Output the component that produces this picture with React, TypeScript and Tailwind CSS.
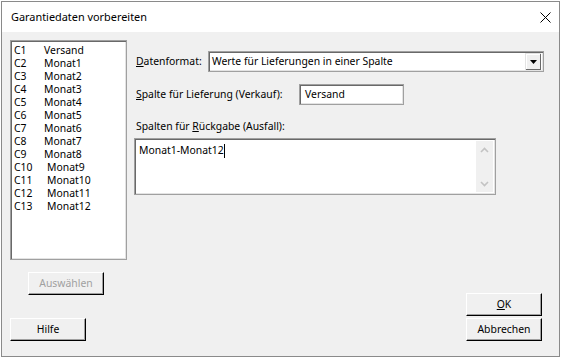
import type { ReactNode } from "react";

const columns: [string, string][] = [
  ["C1", "Versand"],
  ["C2", "Monat1"],
  ["C3", "Monat2"],
  ["C4", "Monat3"],
  ["C5", "Monat4"],
  ["C6", "Monat5"],
  ["C7", "Monat6"],
  ["C8", "Monat7"],
  ["C9", "Monat8"],
  ["C10", "Monat9"],
  ["C11", "Monat10"],
  ["C12", "Monat11"],
  ["C13", "Monat12"],
];

const sunken =
  "border border-[#a0a0a0] shadow-[inset_1px_1px_0_#696969,inset_-1px_-1px_0_#e3e3e3] bg-white";

const Button = ({
  children,
  disabled,
  className = "",
}: {
  children: ReactNode;
  disabled?: boolean;
  className?: string;
}) => (
  <button
    className={`w-[76px] h-[23px] bg-[#f0f0f0] border-t border-l border-b border-r border-t-white border-l-white border-b-black border-r-black shadow-[inset_-1px_-1px_0_#a0a0a0] flex items-center justify-center leading-none ${
      disabled ? "text-[#a0a0a0]" : "text-black"
    } ${className}`}
  >
    {children}
  </button>
);

const Chevron = ({ up }: { up?: boolean }) => (
  <svg width="9" height="6" viewBox="0 0 9 6">
    <path
      d={up ? "M1 5 L4.5 1.5 L8 5" : "M1 1 L4.5 4.5 L8 1"}
      fill="none"
      stroke="#c3c3c3"
      strokeWidth="1.6"
    />
  </svg>
);

export default function App() {
  return (
    <div className="w-[561px] h-[360px] bg-white pt-[1px] pl-[1px] font-['Noto_Sans','Open_Sans',sans-serif] text-[10.4px] text-black">
      <div className="w-[559px] h-[356px] border border-[#8a8a8a] flex flex-col">
        {/* title bar */}
        <div className="h-[30px] bg-white flex items-center justify-between pl-[9px] pr-[8px]">
          <span className="text-[10.9px]">Garantiedaten vorbereiten</span>
          <svg width="11" height="11" viewBox="0 0 11 11">
            <path d="M0.5 0.5 L10.5 10.5 M10.5 0.5 L0.5 10.5" stroke="#000" strokeWidth="1" />
          </svg>
        </div>

        {/* body */}
        <div className="flex-1 bg-[#f0f0f0] flex pl-[8px] pt-[8px] pb-[15px]">
          {/* left column */}
          <div className="flex flex-col">
            <div className={`w-[117px] h-[220px] p-[2px] ${sunken}`}>
              <div className="pl-[1px] pt-[1px]">
                {columns.map(([c, name]) => (
                  <div key={c} className="flex h-[13px] items-center leading-[13px]">
                    <span className={c.length > 2 ? "w-[33px]" : "w-[30px]"}>{c}</span>
                    <span>{name}</span>
                  </div>
                ))}
              </div>
            </div>
            <Button disabled className="mt-[12px] ml-[18px]">
              Auswählen
            </Button>
            <Button className="mt-auto">Hilfe</Button>
          </div>

          {/* right column */}
          <div className="ml-[7px] w-[410px] flex flex-col">
            <div className="mt-[11px] flex items-center h-[21px]">
              <span className="w-[74px] pl-[2px]">
                <span className="underline">D</span>atenformat:
              </span>
              <div className={`w-[336px] h-[21px] p-[2px] flex items-center ${sunken}`}>
                <span className="flex-1 pl-[1px]">Werte für Lieferungen in einer Spalte</span>
                <div className="w-[16px] h-[17px] bg-[#f0f0f0] border-t border-l border-t-[#e3e3e3] border-l-[#e3e3e3] shadow-[inset_-1px_-1px_0_#696969,inset_1px_1px_0_#fff] flex items-center justify-center">
                  <svg width="7" height="4" viewBox="0 0 7 4">
                    <path d="M0 0 H7 L3.5 4 Z" fill="#000" />
                  </svg>
                </div>
              </div>
            </div>

            <div className="mt-[12px] flex items-center h-[21px]">
              <span className="w-[165px] pl-[2px]">
                <span className="underline">S</span>palte für Lieferung (Verkauf):
              </span>
              <div className={`w-[105px] h-[21px] pl-[5px] flex items-center ${sunken}`}>
                Versand
              </div>
            </div>

            <div className="mt-[13px] h-[16px] leading-[16px] pl-[2px]">
              Spalten für <span className="underline">R</span>ückgabe (Ausfall):
            </div>

            <div className={`mt-[4px] w-[362px] h-[57px] p-[2px] flex ${sunken}`}>
              <div className="flex-1 pl-[2px] pt-[3px] leading-[13px] flex items-start">
                <span>Monat1-Monat12</span>
                <span className="w-[1px] h-[14px] bg-black" />
              </div>
              <div className="w-[17px] bg-[#f0f0f0] flex flex-col justify-between">
                <div className="h-[17px] flex items-center justify-center">
                  <Chevron up />
                </div>
                <div className="h-[17px] flex items-center justify-center">
                  <Chevron />
                </div>
              </div>
            </div>

            <div className="mt-auto self-end mr-[2px] flex flex-col gap-[2px]">
              <Button>
                <span>
                  <span className="underline">O</span>K
                </span>
              </Button>
              <Button>Abbrechen</Button>
            </div>
          </div>
        </div>
      </div>
    </div>
  );
}
